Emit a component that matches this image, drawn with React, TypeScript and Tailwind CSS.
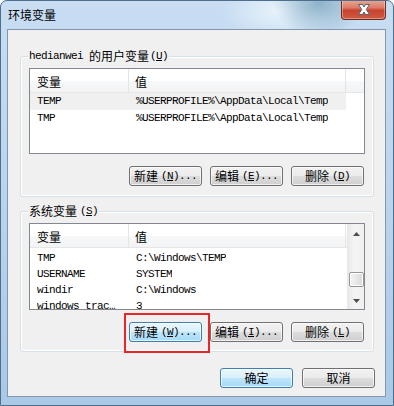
import React from "react";

const mono = "font-['Liberation_Mono','Noto_Sans_CJK_SC',monospace] text-[11px] tracking-[-0.6px] leading-none";
const cjk = "font-['Noto_Sans_CJK_SC','Noto_Sans',sans-serif] text-[12px] leading-none";

type BtnProps = {
  label: string;
  keyChar?: string;
  dots?: boolean;
  blue?: boolean;
};

const Btn = ({ label, keyChar, dots, blue }: BtnProps) => {
  const face = blue
    ? "border-[#3c7fb1] bg-[linear-gradient(#eaf6fd_0%,#d9f0fc_48%,#bee6fd_50%,#a7d9f5_100%)]"
    : "border-[#707070] bg-[linear-gradient(#f2f2f2_0%,#ebebeb_48%,#dddddd_50%,#cfcfcf_100%)]";
  return (
    <div
      className={`w-[73px] h-[20px] rounded-[3px] border ${face} shadow-[inset_0_0_0_1px_rgba(255,255,255,0.7)] flex items-center justify-center text-black`}
    >
      <span className={cjk}>{label}</span>
      {keyChar ? (
        <span className={`${mono} ml-[3px]`}>
          (<span className="underline underline-offset-1">{keyChar}</span>){dots ? "..." : ""}
        </span>
      ) : null}
    </div>
  );
};

const GroupLabel = ({ children }: { children: React.ReactNode }) => (
  <div className="absolute left-[7px] -top-[8px] px-[1px] bg-[#f0f0f0] flex items-center h-[14px] text-black">
    {children}
  </div>
);

const Header = ({ full }: { full: boolean }) => (
  <div className="shrink-0 flex h-[24px] border-b border-[#e5e5e5] bg-[linear-gradient(#ffffff_0%,#ffffff_50%,#f7f8f9_51%,#f2f3f5_100%)] text-black">
    <div className={`${cjk} w-[99px] pl-[7px] pt-[2px] flex items-center border-r border-[#e5e5e5]`}>变量</div>
    <div className={`${cjk} w-[217px] pl-[6px] pt-[2px] flex items-center border-r border-[#e5e5e5]`}>值</div>
    {full ? <div className="flex-1" /> : null}
  </div>
);

type Row = { name: string; value: string; sel?: boolean };

const Rows = ({ rows, h }: { rows: Row[]; h: string }) => (
  <div className="shrink-0 flex flex-col">
    {rows.map((r) => (
      <div key={r.name} className={`shrink-0 flex ${h} items-center w-[316px] ${r.sel ? "bg-[#f0f0f0]" : ""}`}>
        <div className={`${mono} w-[100px] pl-[7px] pr-[10px] whitespace-nowrap overflow-hidden text-ellipsis`}>{r.name}</div>
        <div className={`${mono} pl-[6px] whitespace-nowrap overflow-hidden`}>{r.value}</div>
      </div>
    ))}
  </div>
);

const Arrow = ({ up }: { up?: boolean }) => (
  <svg width="7" height="4" viewBox="0 0 7 4">
    {up ? <path d="M0 4 L3.5 0 L7 4 Z" fill="#4d4d4d" /> : <path d="M0 0 L3.5 4 L7 0 Z" fill="#4d4d4d" />}
  </svg>
);

const Scrollbar = () => (
  <div className="shrink-0 w-[17px] h-full border-l border-[#e8e8e8] bg-[linear-gradient(90deg,#e9e9e9,#f4f4f4_40%,#f0f0f0)] flex flex-col items-center">
    <div className="shrink-0 h-[17px] flex items-center justify-center pt-[2px]">
      <Arrow up />
    </div>
    <div className="shrink-0 h-[31px]" />
    <div className="shrink-0 w-[15px] h-[15px] rounded-[2px] border border-[#979797] bg-[linear-gradient(90deg,#f4f4f4,#e8e8e8_50%,#d8d8d8)] shadow-[inset_0_0_0_1px_#ffffff]" />
    <div className="flex-1" />
    <div className="shrink-0 h-[16px] flex items-center justify-center">
      <Arrow />
    </div>
  </div>
);

export default function App() {
  const userRows: Row[] = [
    { name: "TEMP", value: "%USERPROFILE%\\AppData\\Local\\Temp", sel: true },
    { name: "TMP", value: "%USERPROFILE%\\AppData\\Local\\Temp" },
  ];
  const sysRows: Row[] = [
    { name: "TMP", value: "C:\\Windows\\TEMP" },
    { name: "USERNAME", value: "SYSTEM" },
    { name: "windir", value: "C:\\Windows" },
    { name: "windows_tracing_flags", value: "3" },
  ];

  return (
    <div className="w-[394px] h-[406px] relative overflow-hidden rounded-t-[7px] border border-[#4f6d8c] bg-[radial-gradient(ellipse_46px_34px_at_318px_2px,#8eb2c8_0%,rgba(142,178,200,0)_100%),radial-gradient(ellipse_60px_30px_at_280px_10px,rgba(236,246,252,0.9)_0%,rgba(236,246,252,0)_100%),linear-gradient(#c8ddf2_0%,#bcd6ef_40%,#a9c9e7_100%)] flex flex-col">
      {/* title bar */}
      <div className="shrink-0 h-[28px] pl-[7px] flex items-center">
        <span className={`${cjk} text-black`}>环境变量</span>
      </div>

      {/* close button */}
      <div className="absolute -top-[1px] right-[7px] w-[45px] h-[20px] rounded-b-[4px] border border-t-0 border-[#6b2c22] bg-[linear-gradient(#e9a996_0%,#dc7b68_40%,#c8432e_55%,#d05a3f_100%)] shadow-[inset_0_0_0_1px_rgba(255,255,255,0.35)] flex items-center justify-center">
        <svg width="16" height="13" viewBox="0 0 16 13">
          <path d="M2.5 1.5 L6.5 1.5 L8 4 L9.5 1.5 L13.5 1.5 L10.3 6.5 L13.5 11.5 L9.5 11.5 L8 9 L6.5 11.5 L2.5 11.5 L5.7 6.5 Z" fill="#ffffff" stroke="#54606c" strokeWidth="1" strokeLinejoin="round" />
        </svg>
      </div>

      {/* client area */}
      <div className="shrink-0 ml-[6px] w-[379px] h-[368px] border border-[#8397ad] bg-[#f0f0f0] flex flex-col">
        {/* user variables */}
        <div className="shrink-0 relative mt-[26px] ml-[12px] w-[354px] h-[141px] rounded-[3px] border border-[#d5dfe5] shadow-[inset_0_0_0_1px_#ffffff] flex flex-col">
          <GroupLabel>
            <span className={mono}>hedianwei</span>
            <span className={`${cjk} ml-[6px]`}>的用户变量</span>
            <span className={`${mono} ml-[1px]`}>
              (<span className="underline underline-offset-1">U</span>)
            </span>
          </GroupLabel>
          <div className="shrink-0 mt-[11px] ml-[8px] w-[336px] h-[86px] border border-[#828790] bg-white flex flex-col overflow-hidden">
            <Header full />
            <Rows rows={userRows} h="h-[17px]" />
          </div>
          <div className="shrink-0 mt-[12px] pr-[9px] flex justify-end gap-[8px]">
            <Btn label="新建" keyChar="N" dots />
            <Btn label="编辑" keyChar="E" dots />
            <Btn label="删除" keyChar="D" />
          </div>
        </div>

        {/* system variables */}
        <div className="shrink-0 relative mt-[14px] ml-[12px] w-[354px] h-[141px] rounded-[3px] border border-[#d5dfe5] shadow-[inset_0_0_0_1px_#ffffff] flex flex-col">
          <GroupLabel>
            <span className={cjk}>系统变量</span>
            <span className={`${mono} ml-[3px]`}>
              (<span className="underline underline-offset-1">S</span>)
            </span>
          </GroupLabel>
          <div className="shrink-0 mt-[11px] ml-[8px] w-[336px] h-[87px] border border-[#828790] bg-white flex overflow-hidden">
            <div className="w-[317px] shrink-0 flex flex-col overflow-hidden">
              <Header full={false} />
              <div className="shrink-0 mt-[2px]">
                <Rows rows={sysRows} h="h-[16px]" />
              </div>
            </div>
            <Scrollbar />
          </div>
          <div className="shrink-0 mt-[12px] pr-[9px] flex justify-end gap-[8px]">
            <Btn label="新建" keyChar="W" dots blue />
            <Btn label="编辑" keyChar="I" dots />
            <Btn label="删除" keyChar="L" />
          </div>
        </div>

        {/* dialog buttons */}
        <div className="shrink-0 mt-[16px] pr-[10px] flex justify-end gap-[9px]">
          <Btn label="确定" blue />
          <Btn label="取消" />
        </div>
      </div>

      {/* annotation */}
      <div className="absolute left-[123px] top-[312px] w-[86px] h-[40px] border-2 border-[#e8262a]" />
    </div>
  );
}
